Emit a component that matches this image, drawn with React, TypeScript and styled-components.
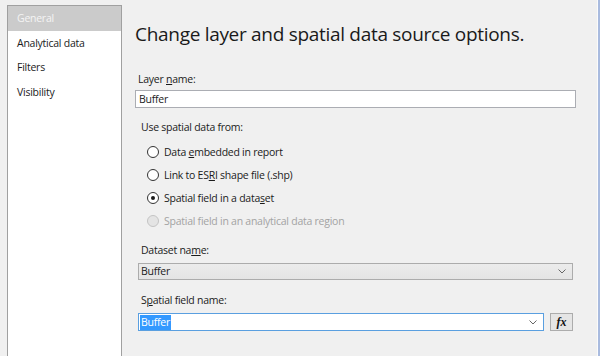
import React from "react";
import styled, { createGlobalStyle } from "styled-components";

const GlobalStyle = createGlobalStyle`
  html, body {
    margin: 0;
    padding: 0;
    background: #f0f0f0;
  }
  body {
    font-family: "Open Sans", "Noto Sans", sans-serif;
    color: #1b1b1b;
  }
`;

const Frame = styled.div`
  display: flex;
  width: 600px;
  height: 356px;
  overflow: hidden;
  background: #f0f0f0;
`;

const Sidebar = styled.div`
  margin: 5px 0 0 7px;
  width: 113px;
  flex-shrink: 0;
  background: #ffffff;
  border: 1px solid #a0a0a0;
  border-bottom: none;
  display: flex;
  flex-direction: column;
`;

const NavItem = styled.div<{ $active?: boolean }>`
  height: 24.5px;
  line-height: 24.5px;
  padding-left: 9px;
  font-size: 10.5px;
  letter-spacing: -0.25px;
  background: ${(p) => (p.$active ? "#cbcbcb" : "transparent")};
  color: ${(p) => (p.$active ? "#f4f4f4" : "#1b1b1b")};
`;

const Main = styled.div`
  flex: 1;
  padding: 22px 21px 0 13px;
  display: flex;
  flex-direction: column;
`;

const WindowEdge = styled.div`
  width: 2px;
  flex-shrink: 0;
  border-left: 1px solid #fbfbfb;
  background: #a9bbdf;
`;

const Title = styled.h1`
  margin: 0;
  font-size: 19px;
  letter-spacing: -0.3px;
  line-height: 24px;
  font-weight: 400;
  color: #1a1a1a;
`;

const Label = styled.div<{ $gap?: number }>`
  margin-top: ${(p) => p.$gap ?? 0}px;
  padding-left: 3px;
  font-size: 10.5px;
  letter-spacing: -0.25px;
  line-height: 16px;
  color: #1b1b1b;
`;

const TextBox = styled.div`
  margin-top: 3px;
  height: 16px;
  border: 1px solid #abadb3;
  background: #ffffff;
  font-size: 10.5px;
  letter-spacing: -0.25px;
  line-height: 16px;
  padding-left: 3px;
`;

const Group = styled.div`
  padding: 0 3px;
  display: flex;
  flex-direction: column;
`;

const RadioList = styled.div`
  margin-top: 5px;
  display: flex;
  flex-direction: column;
`;

const RadioRow = styled.div<{ $disabled?: boolean }>`
  height: 23px;
  display: flex;
  align-items: center;
  gap: 5px;
  padding-left: 9px;
  font-size: 10.5px;
  letter-spacing: -0.25px;
  color: ${(p) => (p.$disabled ? "#a3a3a3" : "#1b1b1b")};
`;

const RadioCircle = styled.span<{ $checked?: boolean; $disabled?: boolean }>`
  width: 10px;
  height: 10px;
  border-radius: 50%;
  border: 1px solid ${(p) => (p.$disabled ? "#c4c4c4" : "#333333")};
  background: ${(p) => (p.$disabled ? "#e4e4e4" : "#ffffff")};
  display: flex;
  align-items: center;
  justify-content: center;
  flex-shrink: 0;

  &::after {
    content: "";
    width: 4px;
    height: 4px;
    border-radius: 50%;
    background: #1a1a1a;
    display: ${(p) => (p.$checked ? "block" : "none")};
  }
`;

const DropDown = styled.div<{ $focused?: boolean }>`
  flex: 1;
  height: ${(p) => (p.$focused ? 16 : 17)}px;
  margin-top: 5px;
  display: flex;
  align-items: center;
  justify-content: space-between;
  padding: 0 6px 0 1px;
  font-size: 10.5px;
  letter-spacing: -0.25px;
  border: 1px solid ${(p) => (p.$focused ? "#5a9fe0" : "#acacac")};
  background: ${(p) =>
    p.$focused ? "#ffffff" : "linear-gradient(#ececec, #e4e4e4)"};
`;

const Value = styled.span<{ $selected?: boolean }>`
  padding: 0 1px;
  line-height: 15px;
  background: ${(p) => (p.$selected ? "#3399ff" : "transparent")};
  color: ${(p) => (p.$selected ? "#ffffff" : "#1b1b1b")};
`;

const ComboRow = styled.div`
  display: flex;
  align-items: flex-start;
  gap: 6px;
`;

const FxButton = styled.div`
  margin-top: 5px;
  width: 21px;
  height: 16px;
  border: 1px solid #acacac;
  background: #e5e5e5;
  display: flex;
  align-items: center;
  justify-content: center;
  font-family: "Liberation Serif", serif;
  font-style: italic;
  font-weight: 700;
  font-size: 12px;
  color: #111111;
`;

const Chevron = () => (
  <svg width="8" height="5" viewBox="0 0 8 5">
    <path d="M0.5 0.5 L4 4 L7.5 0.5" fill="none" stroke="#666" strokeWidth="1" />
  </svg>
);

const radios = [
  { label: <>Data <u>e</u>mbedded in report</> },
  { label: <>Link to ES<u>R</u>I shape file (.shp)</> },
  { label: <>Spatial field in a data<u>s</u>et</>, checked: true },
  { label: <>Spatial field in an analytical data region</>, disabled: true },
];

export default function App() {
  return (
    <Frame>
      <GlobalStyle />
      <Sidebar>
        <NavItem $active>General</NavItem>
        <NavItem>Analytical data</NavItem>
        <NavItem>Filters</NavItem>
        <NavItem>Visibility</NavItem>
      </Sidebar>
      <Main>
        <Title>Change layer and spatial data source options.</Title>
        <Label $gap={25}>
          Layer <u>n</u>ame:
        </Label>
        <TextBox>Buffer</TextBox>
        <Group>
          <Label $gap={11}>Use spatial data from:</Label>
          <RadioList>
            {radios.map((r, i) => (
              <RadioRow key={i} $disabled={r.disabled}>
                <RadioCircle $checked={r.checked} $disabled={r.disabled} />
                <span>{r.label}</span>
              </RadioRow>
            ))}
          </RadioList>
          <Label $gap={10}>
            Dataset na<u>m</u>e:
          </Label>
          <DropDown>
            <Value>Buffer</Value>
            <Chevron />
          </DropDown>
          <Label $gap={12}>
            S<u>p</u>atial field name:
          </Label>
          <ComboRow>
            <DropDown $focused>
              <Value $selected>Buffer</Value>
              <Chevron />
            </DropDown>
            <FxButton>fx</FxButton>
          </ComboRow>
        </Group>
      </Main>
      <WindowEdge />
    </Frame>
  );
}
